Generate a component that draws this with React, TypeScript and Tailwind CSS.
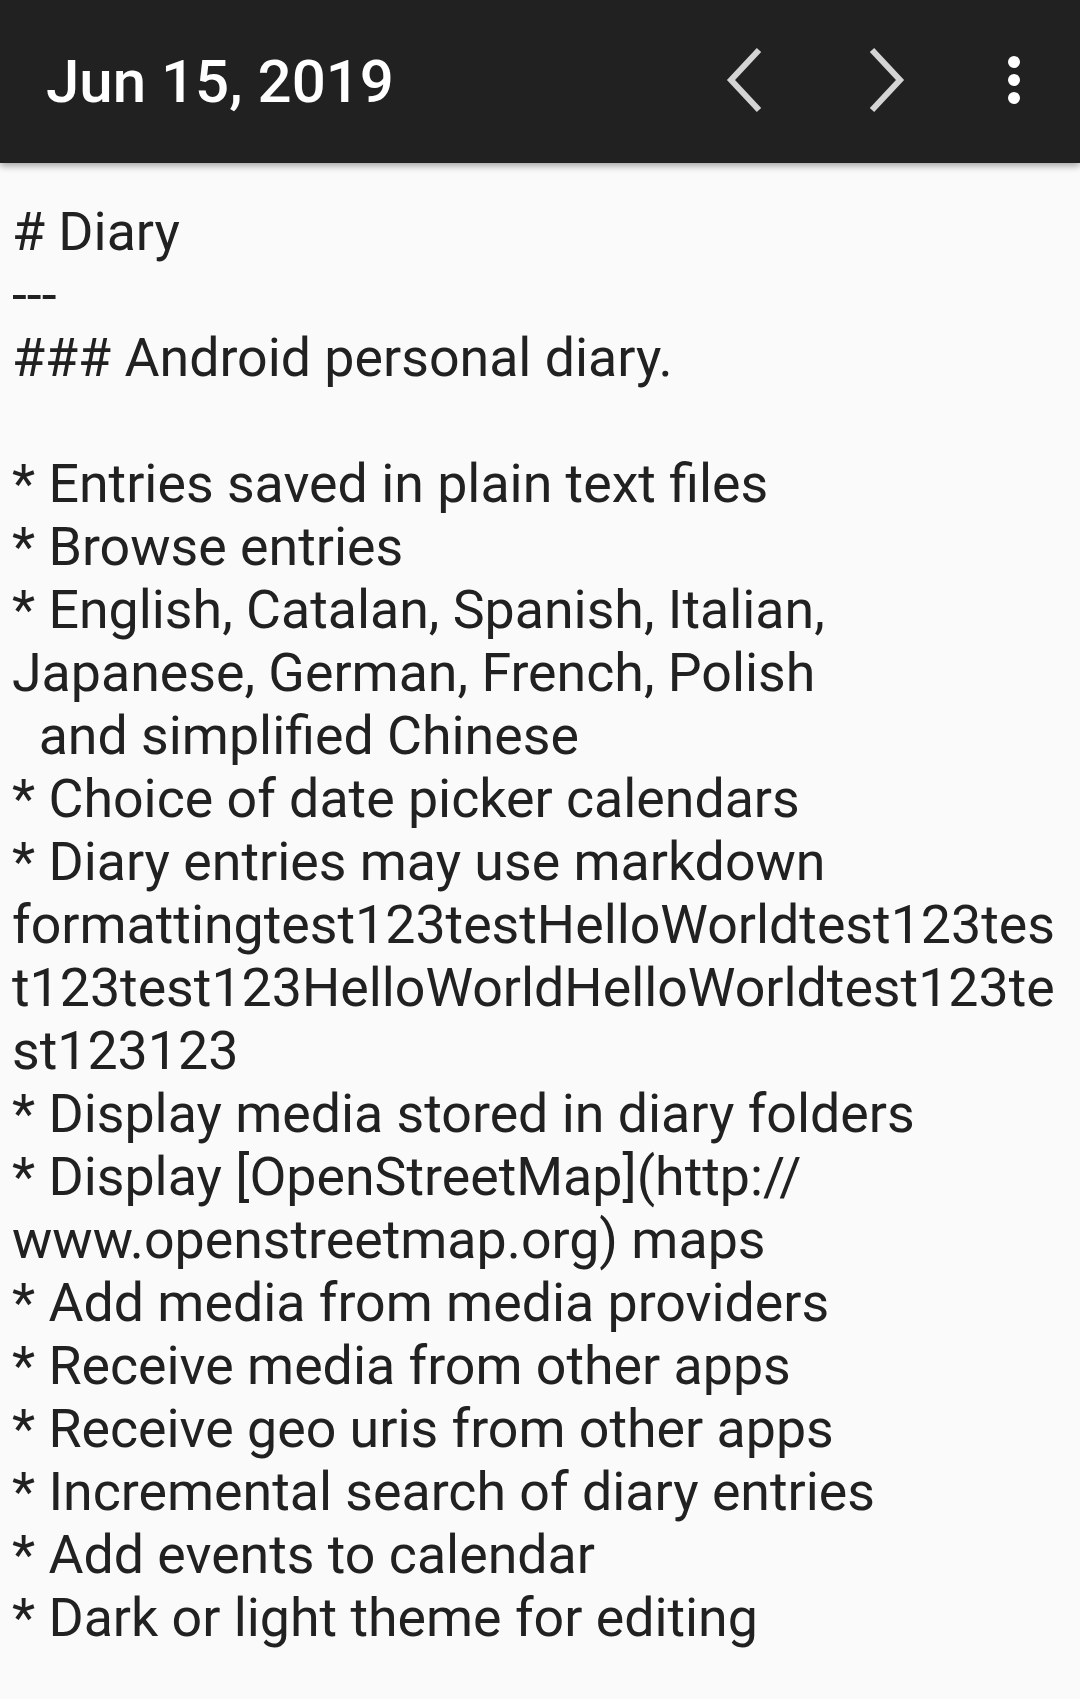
import React from "react";

const lines: string[] = [
  "# Diary",
  "---",
  "### Android personal diary.",
  "",
  "* Entries saved in plain text files",
  "* Browse entries",
  "* English, Catalan, Spanish, Italian,",
  "Japanese, German, French, Polish",
  "  and simplified Chinese",
  "* Choice of date picker calendars",
  "* Diary entries may use markdown",
  "formattingtest123testHelloWorldtest123tes",
  "t123test123HelloWorldHelloWorldtest123te",
  "st123123",
  "* Display media stored in diary folders",
  "* Display [OpenStreetMap](http://",
  "www.openstreetmap.org) maps",
  "* Add media from media providers",
  "* Receive media from other apps",
  "* Receive geo uris from other apps",
  "* Incremental search of diary entries",
  "* Add events to calendar",
  "* Dark or light theme for editing",
];

export default function App() {
  return (
    <div className="w-[1080px] min-h-[1699px] bg-[#fafafa] font-['Roboto','Noto_Sans',sans-serif]">
      <header className="relative z-10 flex h-[163px] items-center bg-[#212121] pl-[46px] pr-[60px] shadow-[0_3px_7px_rgba(0,0,0,0.35)]">
        <div className="flex-1 text-[60px] font-medium leading-none text-white">Jun 15, 2019</div>
        <div className="flex items-center pb-[4px]">
          <svg width="40" height="68" viewBox="0 0 40 68" className="block">
            <polyline points="34,4 6,34 34,64" fill="none" stroke="#d4d4d4" strokeWidth="6" strokeLinejoin="miter" />
          </svg>
          <svg width="40" height="68" viewBox="0 0 40 68" className="ml-[101px] block">
            <polyline points="6,4 34,34 6,64" fill="none" stroke="#d4d4d4" strokeWidth="6" strokeLinejoin="miter" />
          </svg>
          <svg width="12" height="48" viewBox="0 0 12 48" className="ml-[102px] block">
            <circle cx="6" cy="6" r="6" fill="#ffffff" />
            <circle cx="6" cy="24" r="6" fill="#ffffff" />
            <circle cx="6" cy="42" r="6" fill="#ffffff" />
          </svg>
        </div>
      </header>
      <main className="pl-[12px] pt-[37px] text-[53.7px] leading-[63px] text-[#212121]">
        {lines.map((l, i) => (
          <div key={i} className="h-[63px] whitespace-pre">
            {l}
          </div>
        ))}
      </main>
    </div>
  );
}
